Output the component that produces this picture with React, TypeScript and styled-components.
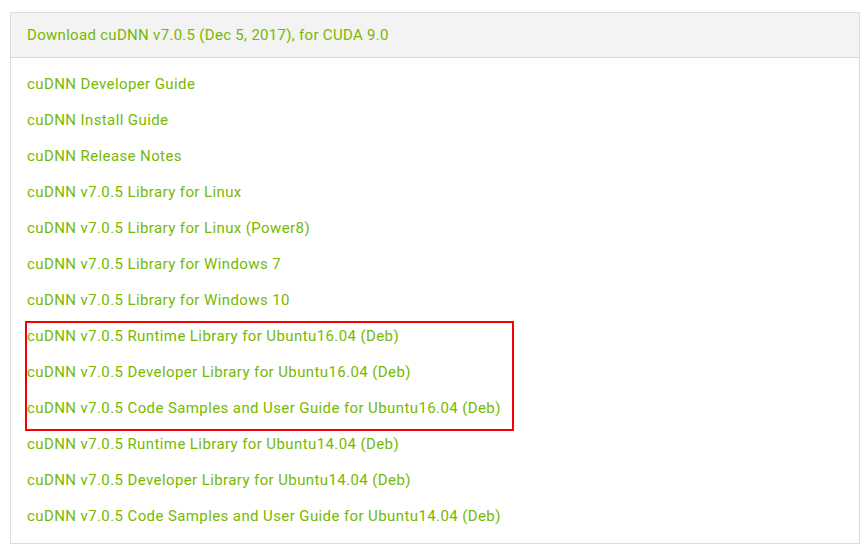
import React from "react";
import styled, { createGlobalStyle } from "styled-components";

const Global = createGlobalStyle`
  html, body { margin: 0; padding: 0; background: #ffffff; }
  body { font-family: Roboto, "Liberation Sans", Arial, sans-serif; }
`;

const Page = styled.div`
  padding: 12px 7px 0 10px;
  width: 867px;
  box-sizing: border-box;
`;

const Panel = styled.section`
  border: 1px solid #dcdcdc;
  width: 850px;
  box-sizing: border-box;
  background: #fff;
`;

const Header = styled.div`
  height: 44px;
  background: #f3f3f3;
  border-bottom: 1px solid #d9d9d9;
  display: flex;
  align-items: center;
  padding-left: 16px;
`;

const HeaderLink = styled.a`
  color: #76b900;
  font-size: 15px;
  text-decoration: none;
  letter-spacing: 0.3px;
`;

const List = styled.ul`
  position: relative;
  list-style: none;
  margin: 0;
  padding: 8px 0 9px 16px;
`;

const Item = styled.li`
  height: 36px;
  display: flex;
  align-items: center;
`;

const ItemLink = styled.a`
  color: #76b900;
  font-size: 15px;
  text-decoration: none;
  letter-spacing: 0.4px;
`;

const Highlight = styled.div<{ $top: number; $height: number; $width: number }>`
  position: absolute;
  left: 14px;
  top: ${(p) => p.$top}px;
  width: ${(p) => p.$width}px;
  height: ${(p) => p.$height}px;
  border: 2px solid #f50000;
  box-sizing: border-box;
  pointer-events: none;
`;

const items = [
  "cuDNN Developer Guide",
  "cuDNN Install Guide",
  "cuDNN Release Notes",
  "cuDNN v7.0.5 Library for Linux",
  "cuDNN v7.0.5 Library for Linux (Power8)",
  "cuDNN v7.0.5 Library for Windows 7",
  "cuDNN v7.0.5 Library for Windows 10",
  "cuDNN v7.0.5 Runtime Library for Ubuntu16.04 (Deb)",
  "cuDNN v7.0.5 Developer Library for Ubuntu16.04 (Deb)",
  "cuDNN v7.0.5 Code Samples and User Guide for Ubuntu16.04 (Deb)",
  "cuDNN v7.0.5 Runtime Library for Ubuntu14.04 (Deb)",
  "cuDNN v7.0.5 Developer Library for Ubuntu14.04 (Deb)",
  "cuDNN v7.0.5 Code Samples and User Guide for Ubuntu14.04 (Deb)",
];

export default function App() {
  return (
    <>
      <Global />
      <Page>
        <Panel>
          <Header>
            <HeaderLink href="#">Download cuDNN v7.0.5 (Dec 5, 2017), for CUDA 9.0</HeaderLink>
          </Header>
          <List>
            {items.map((t) => (
              <Item key={t}>
                <ItemLink href="#">{t}</ItemLink>
              </Item>
            ))}
            <Highlight $top={263} $height={110} $width={489} />
          </List>
        </Panel>
      </Page>
    </>
  );
}
